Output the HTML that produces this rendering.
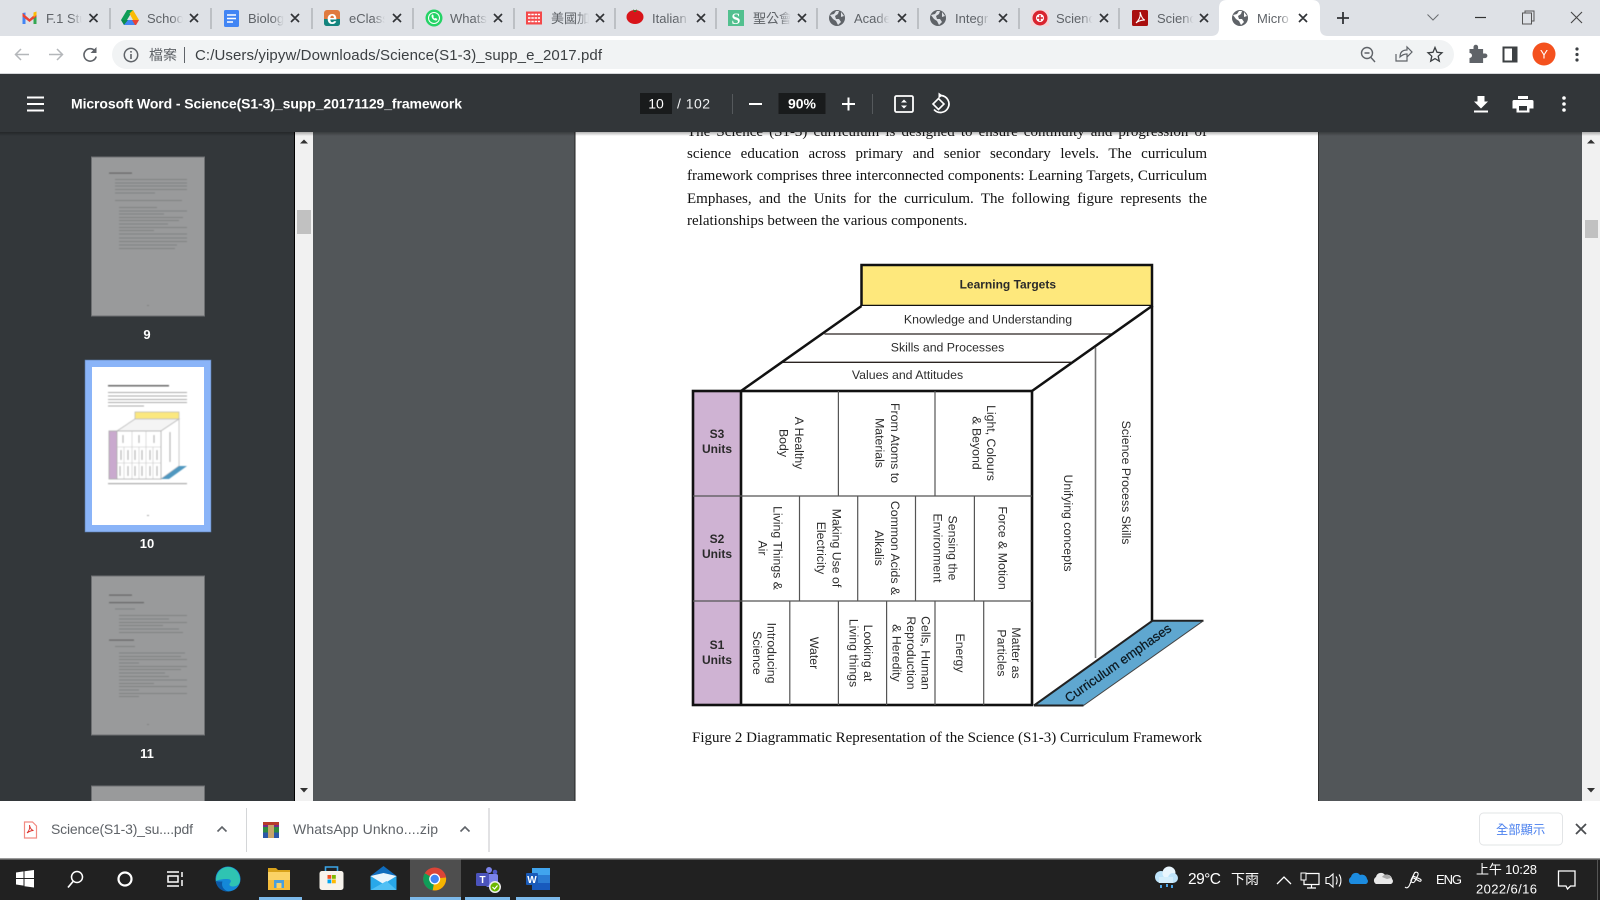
<!DOCTYPE html>
<html><head><meta charset="utf-8"><title>Science(S1-3)_supp_e_2017.pdf</title>
<style>
html,body{margin:0;padding:0;width:1600px;height:900px;overflow:hidden;background:#525659}
svg{position:absolute;left:0;top:0}
text{font-family:"Liberation Sans","Noto Sans CJK TC",sans-serif}
.tab{font-size:13px;fill:#5f6368}
.d{font-size:12.3px;fill:#2c2c2c;text-anchor:middle;dominant-baseline:central}
.b{font-size:12px;font-weight:bold;fill:#2a2a2a;text-anchor:middle;dominant-baseline:central}
.x{stroke:#303336;stroke-width:1.7;fill:none}
#para{position:absolute;left:687px;top:132px;width:520px;height:112px;overflow:hidden;font:15px/22.45px "Liberation Serif",serif;color:#111}
#para div{white-space:nowrap;text-align:justify;text-align-last:justify;height:22.45px}
#para div.last{text-align-last:left}
</style></head><body>
<svg width="1600" height="900" viewBox="0 0 1600 900">
<defs>
<linearGradient id="f" x1="0" x2="1" y1="0" y2="0"><stop offset="0" stop-color="#dee1e6" stop-opacity="0"/><stop offset=".75" stop-color="#dee1e6"/><stop offset="1" stop-color="#dee1e6"/></linearGradient>
<linearGradient id="fw" x1="0" x2="1" y1="0" y2="0"><stop offset="0" stop-color="#fff" stop-opacity="0"/><stop offset=".75" stop-color="#fff"/><stop offset="1" stop-color="#fff"/></linearGradient>
<linearGradient id="sh" x1="0" x2="0" y1="0" y2="1"><stop offset="0" stop-color="#000" stop-opacity=".3"/><stop offset="1" stop-color="#000" stop-opacity="0"/></linearGradient>
<filter id="bl" x="-5%" y="-5%" width="110%" height="110%"><feGaussianBlur stdDeviation=".55"/></filter>
<g id="globe"><circle r="8" fill="#5f6368"/><path d="M-7-3 L-3-4 L-1-7 L2-7 L1-4 L-2-2 L-1 1 L2 1 L4 4 L1 7 L-1 3 L-4 1 Z M4-6 L7-2 L4-1Z" fill="#dee1e6"/></g>
<g id="pg"><rect width="113" height="159" fill="#999a9b" stroke="#6d6f71"/></g>
</defs>

<!-- main backgrounds -->
<rect x="0" y="0" width="1600" height="900" fill="#525659"/>
<rect x="0" y="132" width="294" height="670" fill="#33373a"/>
<rect x="294" y="132" width="1.3" height="670" fill="#000"/>
<rect x="295" y="132" width="18" height="670" fill="#f1f1f1"/>
<rect x="297" y="210" width="14" height="24" fill="#c1c1c1"/>
<path d="M300 143.500h8l-4-4z" fill="#333"/><path d="M300 788h8l-4 4.500z" fill="#333"/>
<rect x="575" y="132" width="744" height="670" fill="#fff"/>
<rect x="574.500" y="132" width="1" height="670" fill="#222"/>
<rect x="1318" y="132" width="1" height="670" fill="#333"/>
<rect x="1582" y="132" width="18" height="670" fill="#f1f1f1"/>
<rect x="1585" y="220" width="13" height="18" fill="#c1c1c1"/>
<path d="M1587 143.500h8l-4-4z" fill="#333"/><path d="M1587 788h8l-4 4.500z" fill="#333"/>

<!-- thumbnails -->
<use href="#pg" x="91.500" y="157"/>
<g fill="#808182" filter="url(#bl)">
<rect x="109" y="172.500" width="23" height="1.200" fill="#666"/>
<rect x="115" y="179" width="72" height="1"/><rect x="115" y="182.500" width="72" height="1"/><rect x="115" y="185.500" width="72" height="1"/><rect x="115" y="189" width="72" height="1"/><rect x="115" y="192.500" width="40" height="1"/>
<rect x="115" y="200" width="67" height="1"/>
<rect x="119" y="207" width="38" height="1"/><rect x="119" y="210.500" width="68" height="1"/><rect x="119" y="213.500" width="45" height="1"/><rect x="119" y="217" width="64" height="1"/><rect x="119" y="220" width="60" height="1"/><rect x="119" y="223.500" width="49" height="1"/><rect x="119" y="227" width="68" height="1"/><rect x="119" y="230" width="35" height="1"/><rect x="119" y="233.500" width="68" height="1"/><rect x="119" y="237.500" width="68" height="1"/><rect x="119" y="241" width="68" height="1"/><rect x="119" y="244.500" width="58" height="1"/><rect x="119" y="248" width="56" height="1"/>
<rect x="147" y="305" width="2" height="1"/>
</g>
<text x="147" y="339" font-size="13" fill="#fff" font-weight="bold" text-anchor="middle">9</text>

<rect x="85" y="360" width="126" height="172" fill="#8ab4f8" stroke="#5a7ba8" stroke-width=".6"/>
<rect x="92" y="367" width="112" height="158" fill="#fff"/>
<g filter="url(#bl)">
<g fill="#aaa">
<rect x="108" y="385" width="61" height="1.500" fill="#666"/>
<rect x="108" y="392" width="79" height="1"/><rect x="108" y="395.500" width="79" height="1"/><rect x="108" y="399" width="79" height="1"/><rect x="108" y="402" width="79" height="1"/><rect x="108" y="405.500" width="36" height="1"/>
<rect x="108" y="483" width="79" height="1.200"/><rect x="147" y="515" width="2" height="1"/>
</g>
<rect x="135" y="412" width="44" height="7" fill="#fbe87f" stroke="#aaa" stroke-width=".6"/>
<path d="M135 419 L117 431 H161 L179 419Z" fill="#f4f4f4" stroke="#bbb" stroke-width=".8"/>
<path d="M161 431 L179 419 V466 L161 479Z" fill="#fff" stroke="#bbb" stroke-width=".8"/>
<rect x="109" y="431" width="8" height="48" fill="#c9a9ce" stroke="#aaa" stroke-width=".8"/>
<rect x="117" y="431" width="44" height="48" fill="#fff" stroke="#aaa" stroke-width=".8"/>
<path d="M117 447H161M117 463H161M132 431V447M146 431V447M124 447V463M132 447V463M139 447V463M146 447V463M153 447V463M124 463V479M132 463V479M139 463V479M146 463V479M153 463V479" stroke="#c4c4c4" stroke-width=".6" fill="none"/>
<path d="M123 435v8M139 435v8M154 435v8M121 450v10M128 450v10M135 450v10M142 450v10M150 450v10M157 450v10M120 466v10M128 466v10M135 466v10M142 466v10M150 466v10M157 466v10M170 432v30" stroke="#b4b4b4" stroke-width="1.200" fill="none"/>
<path d="M161 479 L179 466 H187 L169 479Z" fill="#4f97bf"/>
</g>
<text x="147" y="548" font-size="13" fill="#fff" font-weight="bold" text-anchor="middle">10</text>

<use href="#pg" x="91.500" y="576"/>
<g fill="#808182" filter="url(#bl)">
<rect x="109" y="594.500" width="23" height="1.200" fill="#666"/><rect x="109" y="602" width="35" height="1.200" fill="#666"/>
<rect x="115" y="608.500" width="20" height="1"/><rect x="119" y="615" width="68" height="1"/><rect x="119" y="618.500" width="50" height="1"/><rect x="119" y="622" width="68" height="1"/><rect x="119" y="625" width="44" height="1"/><rect x="119" y="628.500" width="60" height="1"/><rect x="119" y="632" width="64" height="1"/>
<rect x="109" y="639.500" width="25" height="1.200" fill="#666"/><rect x="115" y="646" width="20" height="1"/>
<rect x="119" y="652.500" width="66" height="1"/><rect x="119" y="656" width="62" height="1"/><rect x="119" y="659" width="68" height="1"/><rect x="119" y="662.500" width="20" height="1"/><rect x="119" y="666" width="68" height="1"/><rect x="119" y="669" width="62" height="1"/><rect x="119" y="672.500" width="46" height="1"/><rect x="119" y="676" width="50" height="1"/><rect x="119" y="679.500" width="68" height="1"/><rect x="119" y="683" width="35" height="1"/><rect x="119" y="686" width="68" height="1"/><rect x="119" y="689.500" width="20" height="1"/><rect x="119" y="693" width="68" height="1"/><rect x="119" y="696" width="20" height="1"/>
<rect x="147" y="724" width="2" height="1"/>
</g>
<text x="147" y="758" font-size="13" fill="#fff" font-weight="bold" text-anchor="middle">11</text>
<use href="#pg" x="91.500" y="786"/>

<!-- Diagram -->
<g>
<rect x="861.500" y="265" width="290.500" height="41" fill="#fee87c" stroke="#111" stroke-width="2.500"/>
<path d="M861.500 306 L741 391 H1032 L1152 306Z" fill="#fff"/>
<path d="M824.500 334H1112M783 362.300H1071" stroke="#2a2320" stroke-width="1.300" fill="none"/>
<path d="M861.500 306 L741 391M1152 306 L1032 391" stroke="#111" stroke-width="2.500" fill="none"/>
<path d="M1095.500 347.500V658" stroke="#777" stroke-width="1.600" fill="none"/>
<path d="M1152 306V621" stroke="#111" stroke-width="2.500" fill="none"/>
<rect x="693" y="391" width="48" height="314" fill="#cfb3d3"/>
<rect x="693" y="391" width="339" height="314" fill="none" stroke="#111" stroke-width="2.600"/>
<path d="M741 391V705" stroke="#111" stroke-width="2.600" fill="none"/>
<path d="M693 496H1032M693 601H1032M838.400 391V496M935 391V496M799.500 496V601M857.700 496V601M915.500 496V601M974.400 496V601M789.800 601V705M838.400 601V705M886.600 601V705M935 601V705M983.700 601V705" stroke="#555" stroke-width="1.200" fill="none"/>
<path d="M1152.500 620.700H1203.500L1083.500 705.500H1034Z" fill="#5fa7d0"/>
<path d="M1152.500 620.700H1203.500M1034 705.500H1083.500M1152.500 620.700L1034 705.500" stroke="#222" stroke-width="2" fill="none"/>
<path d="M1083.500 705.500L1203.500 620.700" stroke="#444" stroke-width="1" fill="none"/>

<text class="b" x="1007.800" y="284.300" font-size="12.500">Learning Targets</text>
<text class="d" x="988" y="319.500">Knowledge and Understanding</text>
<text class="d" x="947.500" y="347.700">Skills and Processes</text>
<text class="d" x="907.500" y="375">Values and Attitudes</text>

<text class="b" x="717" y="434">S3</text><text class="b" x="717" y="449">Units</text>
<text class="b" x="717" y="539">S2</text><text class="b" x="717" y="554">Units</text>
<text class="b" x="717" y="645">S1</text><text class="b" x="717" y="660">Units</text>

<text class="d" transform="translate(799,443) rotate(90)">A Healthy</text>
<text class="d" transform="translate(783.600,443) rotate(90)">Body</text>
<text class="d" transform="translate(895,443) rotate(90)">From Atoms to</text>
<text class="d" transform="translate(879.700,443) rotate(90)">Materials</text>
<text class="d" transform="translate(991,443) rotate(90)">Light, Colours</text>
<text class="d" transform="translate(976.500,443) rotate(90)">&amp; Beyond</text>

<text class="d" transform="translate(777.500,548) rotate(90)">Living Things &amp;</text>
<text class="d" transform="translate(762.500,548) rotate(90)">Air</text>
<text class="d" transform="translate(836.500,548) rotate(90)">Making Use of</text>
<text class="d" transform="translate(821,548) rotate(90)">Electricity</text>
<text class="d" transform="translate(895,548) rotate(90)">Common Acids &amp;</text>
<text class="d" transform="translate(879,548) rotate(90)">Alkalis</text>
<text class="d" transform="translate(952.500,548) rotate(90)">Sensing the</text>
<text class="d" transform="translate(937.500,548) rotate(90)">Environment</text>
<text class="d" transform="translate(1002.700,548) rotate(90)">Force &amp; Motion</text>

<text class="d" transform="translate(771.500,653) rotate(90)">Introducing</text>
<text class="d" transform="translate(757,653) rotate(90)">Science</text>
<text class="d" transform="translate(814,653) rotate(90)">Water</text>
<text class="d" transform="translate(868,653) rotate(90)">Looking at</text>
<text class="d" transform="translate(853.500,653) rotate(90)">Living things</text>
<text class="d" transform="translate(925.500,653) rotate(90)">Cells, Human</text>
<text class="d" transform="translate(911,653) rotate(90)">Reproduction</text>
<text class="d" transform="translate(896.500,653) rotate(90)">&amp; Heredity</text>
<text class="d" transform="translate(960,653) rotate(90)">Energy</text>
<text class="d" transform="translate(1016,653) rotate(90)">Matter as</text>
<text class="d" transform="translate(1001.500,653) rotate(90)">Particles</text>
<text class="d" transform="translate(1068,523) rotate(90)">Unifying concepts</text>
<text class="d" transform="translate(1126,482.500) rotate(90)">Science Process Skills</text>
<text class="d" transform="translate(1118,663) rotate(-35)" style="font-size:13px;fill:#0d1a22;stroke:#0d1a22;stroke-width:.25">Curriculum emphases</text>

<text x="692" y="742" font-size="15" fill="#111" textLength="510" style="font-family:'Liberation Serif',serif">Figure 2 Diagrammatic Representation of the Science (S1-3) Curriculum Framework</text>
</g>

<!-- Tab strip -->
<rect x="0" y="0" width="1600" height="36" fill="#dee1e6"/>
<path d="M1211 36 Q1219 36 1219 28 V8 Q1219 0 1227 0 H1312 Q1320 0 1320 8 V28 Q1320 36 1328 36Z" fill="#fff"/>
<rect x="0" y="36" width="1600" height="38" fill="#fff"/>
<rect x="0" y="73" width="1600" height="1" fill="#d5d7da"/>
<rect x="112" y="40" width="1342" height="29" rx="14.500" fill="#f1f3f4"/>
<g stroke="#a6a9ad" stroke-width="1.200"><path d="M110 8V29M211 8V29M312 8V29M413 8V29M514 8V29M615 8V29M716 8V29M817 8V29M918 8V29M1019 8V29M1119 8V29"/></g>

<g>
<text class="tab" x="46" y="23">F.1 Stu</text><rect x="70" y="6" width="16" height="24" fill="url(#f)"/>
<text class="tab" x="147" y="23">Schoo</text><rect x="171" y="6" width="16" height="24" fill="url(#f)"/>
<text class="tab" x="248" y="23">Biolog</text><rect x="272" y="6" width="16" height="24" fill="url(#f)"/>
<text class="tab" x="349" y="23">eClass</text><rect x="373" y="6" width="16" height="24" fill="url(#f)"/>
<text class="tab" x="450" y="23">Whats</text><rect x="474" y="6" width="18" height="24" fill="url(#f)"/>
<text class="tab" x="551" y="23">美國加</text><rect x="577" y="6" width="16" height="24" fill="url(#f)"/>
<text class="tab" x="652" y="23">Italian</text><rect x="676" y="6" width="18" height="24" fill="url(#f)"/>
<text class="tab" x="753" y="23">聖公會</text><rect x="779" y="6" width="16" height="24" fill="url(#f)"/>
<text class="tab" x="854" y="23">Acade</text><rect x="876" y="6" width="18" height="24" fill="url(#f)"/>
<text class="tab" x="955" y="23">Integr</text><rect x="977" y="6" width="18" height="24" fill="url(#f)"/>
<text class="tab" x="1056" y="23">Scienc</text><rect x="1080" y="6" width="17" height="24" fill="url(#f)"/>
<text class="tab" x="1157" y="23">Scienc</text><rect x="1181" y="6" width="17" height="24" fill="url(#f)"/>
<text class="tab" x="1257" y="23">Micro</text><rect x="1279" y="6" width="17" height="24" fill="url(#fw)"/>
</g>
<!-- Tab closes -->
<path class="x" d="M89.500 14l8 8m0-8l-8 8M190 14l8 8m0-8l-8 8M291 14l8 8m0-8l-8 8M393 14l8 8m0-8l-8 8M494 14l8 8m0-8l-8 8M596 14l8 8m0-8l-8 8M697 14l8 8m0-8l-8 8M798 14l8 8m0-8l-8 8M898 14l8 8m0-8l-8 8M999 14l8 8m0-8l-8 8M1100 14l8 8m0-8l-8 8M1200 14l8 8m0-8l-8 8M1299 14l8 8m0-8l-8 8"/>

<!-- Favicons -->
<g transform="translate(29.500,18)"><path d="M-7 6V-5L-4-5.500V6H-6.500Z" fill="#4285f4"/><path d="M4 6V-5.500L7-5V6Z" fill="#34a853"/><path d="M-7-5L0 1L7-5V-1.500L0 4L-7-1.500Z" fill="#ea4335"/><path d="M4-5.500L7-6.500V-3L4-.5Z" fill="#fbbc04"/></g>
<g transform="translate(130,18)"><path d="M-3-8H3L-3 2H-9Z" fill="#0f9d58"/><path d="M3-8L9 2H3L-.500-4.500Z" fill="#fbbc04"/><path d="M-9 2L-6 7H6L9 2Z" fill="#4285f4"/><path d="M-9 2L-6 7L-2 2Z" fill="#0c8c4c"/><path d="M9 2L6 7H5L2 2Z" fill="#ea4335"/></g>
<g transform="translate(231,18)"><rect x="-7" y="-8" width="15" height="17" rx="1.500" fill="#4285f4"/><path d="M-4-3H5M-4 .5H5M-4 4H2" stroke="#fff" stroke-width="1.600" fill="none"/></g>
<g transform="translate(332,18)"><rect x="-8" y="-8" width="16" height="16" rx="3" fill="#e07a3f"/><path d="M-8 1H8V5Q8 8 5 8H-5Q-8 8-8 5Z" fill="#13847e"/><text x="0" y="6" font-size="18" fill="#fff" text-anchor="middle" font-weight="bold">e</text></g>
<g transform="translate(434,18)"><circle r="8.500" fill="#25d366"/><circle r="6" fill="#fff"/><circle r="5" fill="#25d366"/><path d="M-2.500-2.500c0 3 2 5 5 5l1-1.500-2-1-.8.600-1.500-1.500.6-.8-1-2z" fill="#fff"/></g>
<g transform="translate(534,18)"><rect x="-8" y="-6.500" width="16" height="13" fill="#f4494a"/><path d="M-6-3.500H6M-6 0H6M-6 3.500H6" stroke="#fff" stroke-width="1.400" stroke-dasharray="2.500 .8"/></g>
<g transform="translate(635,18)"><ellipse rx="8.500" ry="7" cy="-1" fill="#d8141a"/><path d="M-2-9L0-7L2-9L1-6H-1Z" fill="#2d7d2a"/></g>
<g transform="translate(736,18)"><rect x="-8" y="-8" width="16" height="16" fill="#52c08f"/><text x="0" y="6" font-size="16" fill="#fff" font-weight="bold" text-anchor="middle" style="font-family:'Liberation Serif',serif">S</text></g>
<use href="#globe" x="837" y="18"/><use href="#globe" x="938" y="18"/>
<g transform="translate(1040,18)"><rect x="-9" y="-8" width="18" height="16" fill="#f3d5d8"/><circle r="7.500" fill="#d9232e"/><circle r="4" fill="#fff"/><path d="M0-3v6M-3 0h6" stroke="#d9232e" stroke-width="1.500"/></g>
<g transform="translate(1140,18)"><rect x="-8" y="-8" width="16" height="16" rx="1.500" fill="#a90f0f"/><path d="M-4 5C-1 2 1-2 0-6C1-2 3 2 5 2C2 2-2 3-4 5Z" fill="none" stroke="#fff" stroke-width="1.100"/></g>
<g transform="translate(1240,18)"><circle r="8" fill="#5f6368"/><path d="M-7-3 L-3-4 L-1-7 L2-7 L1-4 L-2-2 L-1 1 L2 1 L4 4 L1 7 L-1 3 L-4 1 Z M4-6 L7-2 L4-1Z" fill="#fff"/></g>

<!-- new tab & window buttons -->
<path d="M1337 18H1349M1343 12V24" stroke="#303336" stroke-width="1.800" fill="none"/>
<path d="M1427.500 14.500l5.500 5.500 5.500-5.500" stroke="#6a6d70" fill="none"/>
<path d="M1475 17.500H1486" stroke="#333" stroke-width="1.200" fill="none"/>
<path d="M1522.500 13h9v11h-9zM1525 13v-2h9v10h-2.500" stroke="#555" fill="none"/>
<path d="M1571 12l11 11m0-11l-11 11" stroke="#444" stroke-width="1.100" fill="none"/>

<!-- Nav toolbar -->
<path d="M29 54.500H15.500M21 49l-5.500 5.500 5.500 5.500" stroke="#b4b7ba" stroke-width="1.500" fill="none"/>
<path d="M49 54.500H62.500M57 49l5.500 5.500-5.500 5.500" stroke="#b4b7ba" stroke-width="1.500" fill="none"/>
<path d="M95 51a6.200 6.200 0 1 0 1.200 5.500" stroke="#5f6368" stroke-width="1.600" fill="none"/><path d="M96.500 47v6h-6z" fill="#5f6368"/>
<circle cx="131" cy="55" r="6.700" stroke="#5f6368" stroke-width="1.500" fill="none"/><path d="M131 54v5M131 51v1.600" stroke="#5f6368" stroke-width="1.600"/>
<text x="149" y="60" font-size="14" fill="#5f6368">檔案</text>
<rect x="184" y="47" width="1" height="16" fill="#5f6368"/>
<text x="195" y="60" font-size="15" fill="#3c4043" textLength="407">C:/Users/yipyw/Downloads/Science(S1-3)_supp_e_2017.pdf</text>
<circle cx="1367" cy="53" r="5.500" stroke="#5f6368" stroke-width="1.400" fill="none"/><path d="M1371 57.500l4 4.500M1364.500 53h5" stroke="#5f6368" stroke-width="1.400" fill="none"/>
<path d="M1396 54v7h11v-4M1400 57c0-5 3-7 7-7v-3l5 5-5 5v-3c-3 0-5 1-7 3z" stroke="#5f6368" stroke-width="1.200" fill="none"/>
<path d="M1435 47.500l2 4.800 5 .5-3.800 3.400 1.100 5-4.300-2.600-4.300 2.600 1.100-5-3.800-3.400 5-.5z" stroke="#3c4043" stroke-width="1.300" fill="none"/>
<path d="M1470 50h4v-2a2.300 2.300 0 0 1 4.600 0v2h5v4.500h2a2.300 2.300 0 0 1 0 4.600h-2v4.900h-13.600v-5a2.500 2.500 0 0 0 0-5z" fill="#5f6368" transform="translate(-.5,-1) "/>
<path d="M1503.500 47.500h13v14h-13z" stroke="#3c4043" stroke-width="2" fill="none"/><rect x="1512" y="47" width="5" height="15" fill="#3c4043"/>
<circle cx="1544" cy="54" r="11.500" fill="#f4511e"/><text x="1544" y="58.500" font-size="12" fill="#fff" text-anchor="middle">Y</text>
<g fill="#3c4043"><circle cx="1577" cy="49" r="1.600"/><circle cx="1577" cy="54.500" r="1.600"/><circle cx="1577" cy="60" r="1.600"/></g>

<!-- PDF toolbar -->
<rect x="0" y="74" width="1600" height="58" fill="#323639"/>
<rect x="0" y="132" width="1600" height="4" fill="url(#sh)"/>
<path d="M27 97.500H44M27 104H44M27 110.500H44" stroke="#fff" stroke-width="2" fill="none"/>
<text x="71" y="108.500" font-size="14" font-weight="bold" fill="#fff" textLength="391">Microsoft Word - Science(S1-3)_supp_20171129_framework</text>
<rect x="640" y="93" width="32" height="21" fill="#191b1c"/>
<text x="656" y="108.500" font-size="14" fill="#fff" text-anchor="middle">10</text>
<text x="677" y="108.500" font-size="14" fill="#f1f3f4" textLength="33">/ 102</text>
<rect x="732" y="94" width="1" height="20" fill="#55595c"/>
<path d="M749 104H762" stroke="#fff" stroke-width="2"/>
<rect x="778.500" y="93" width="47" height="21" fill="#191b1c"/>
<text x="802" y="108.500" font-size="14" font-weight="bold" fill="#fff" text-anchor="middle" textLength="28">90%</text>
<path d="M842 104H855M848.500 97.500V110.500" stroke="#fff" stroke-width="2"/>
<rect x="872" y="94" width="1" height="20" fill="#55595c"/>
<rect x="895" y="96" width="18" height="16" rx="1.500" stroke="#fff" stroke-width="1.800" fill="none"/>
<path d="M901 102.500l3-3 3 3zM901 105.500l3 3 3-3z" fill="#fff"/>
<path d="M941 95.500a8.500 8.500 0 1 1-7 14" stroke="#fff" stroke-width="1.700" fill="none"/><path d="M938.500 92.500v6l4-3z" fill="#fff"/>
<path d="M933 104l5.500-5.500 5.500 5.500-5.500 5.500z" stroke="#fff" stroke-width="1.600" fill="none"/>
<path d="M1477.500 96h7v5.500h3.500l-7 7-7-7h3.500zM1474 110.500h14v2h-14z" fill="#fff"/>
<path d="M1518 96h10v3h-10zM1514 100h18a1.500 1.500 0 0 1 1.500 1.500v7h-4v4h-13v-4h-4v-7A1.500 1.500 0 0 1 1514 100z" fill="#fff"/><rect x="1519" y="106" width="8" height="4.500" fill="#323639"/>
<g fill="#fff"><circle cx="1564" cy="98" r="1.800"/><circle cx="1564" cy="104" r="1.800"/><circle cx="1564" cy="110" r="1.800"/></g>

<!-- Download shelf -->
<rect x="0" y="801" width="1600" height="57" fill="#fff"/>
<rect x="0" y="858" width="1600" height="1.500" fill="#9a9a9a"/>
<rect x="246" y="808" width="1" height="44" fill="#d4d6d8"/>
<rect x="488.500" y="808" width="1" height="44" fill="#c4c6c8"/>
<path d="M24.500 822h8l4 4v12h-12z" fill="#fff" stroke="#f28b82" stroke-width="1.200"/><path d="M27 833c2-2 3-5 2.500-8 .5 3 2 5 4 5.500-2.500 0-4.500 1-6.500 2.500z" fill="none" stroke="#d9302a" stroke-width=".9"/>
<text x="51" y="834" font-size="14" fill="#5f6368" textLength="142">Science(S1-3)_su....pdf</text>
<path d="M217.500 831.500l4.500-4.500 4.500 4.500" stroke="#5f6368" stroke-width="1.600" fill="none"/>
<g transform="translate(263,822)"><rect width="16" height="16" fill="#7a2a8a"/><rect y="5" width="16" height="5.500" fill="#2d8a42"/><rect y="10.500" width="16" height="5.500" fill="#2b57a8"/><rect x="5" width="6" height="16" fill="#c7a46a"/><rect x="0" y="0" width="16" height="3" fill="#b83a2a"/></g>
<text x="293" y="834" font-size="14" fill="#5f6368" textLength="145">WhatsApp Unkno....zip</text>
<path d="M460.500 831.500l4.500-4.500 4.500 4.500" stroke="#5f6368" stroke-width="1.600" fill="none"/>
<rect x="1479.500" y="813" width="83" height="32" rx="4" fill="#fff" stroke="#e2e4e6"/>
<text x="1496" y="834" font-size="12.300" fill="#4a80ee">全部顯示</text>
<path d="M1576 824l10 10m0-10l-10 10" stroke="#4a4d50" stroke-width="1.800" fill="none"/>

<!-- Taskbar -->
<rect x="0" y="859.500" width="1600" height="40.500" fill="#212121"/>
<rect x="410" y="859.500" width="51" height="40.500" fill="#4e4e4e"/>
<g fill="#7cb9ea"><rect x="259" y="897" width="43" height="3"/><rect x="410" y="897" width="51" height="3"/><rect x="465" y="897" width="45" height="3"/><rect x="516" y="897" width="44" height="3"/></g>
<path d="M16 872.500l7.500-1.100V878H16zM24.500 871.200L34 870v8h-9.500zM16 879h7.500v6.600L16 884.500zM24.500 879H34v8.500l-9.500-1.300z" fill="#fff"/>
<circle cx="77" cy="877" r="5.500" stroke="#fff" stroke-width="1.500" fill="none"/><path d="M73 881.500l-5 6" stroke="#fff" stroke-width="1.700"/>
<circle cx="125" cy="879" r="6.500" stroke="#fff" stroke-width="2.200" fill="none"/>
<path d="M167 872h12M167 886h12M168 876h10v6h-10zM182 872v5M182 880v6" stroke="#fff" stroke-width="1.500" fill="none"/>
<!-- edge -->
<g transform="translate(228,879)"><circle r="12.500" fill="#1488d8"/><path d="M-12 2a12 13 0 0 1 24-2c.5 5-3 7.500-7 7.500-3 0-4.500-1.500-3-3.500 1.500-1.500 1.500-4-3-4-5 0-9 1-11 2z" fill="#2fc4b2"/><path d="M-12 2c0 6 6 11 12 10.500-5-2-7-6-5.500-10-2.500 0-5 0-6.500-.5z" fill="#0c59a4"/></g>
<!-- explorer -->
<g transform="translate(279,879)"><path d="M-11-11h8l2 2h12v4h-22z" fill="#d9a21b"/><rect x="-11" y="-7" width="22" height="18" fill="#fbd266"/><rect x="-11" y="1" width="22" height="10" fill="#f4bb3a"/><rect x="-5" y="1" width="10" height="8" fill="#4a9fdc"/><rect x="-2.500" y="4" width="5" height="5" fill="#fbd266"/></g>
<!-- store -->
<g transform="translate(331.500,879)"><path d="M-6-8V-12H6V-8" stroke="#3aa5e8" stroke-width="1.600" fill="none"/><rect x="-12" y="-8" width="24" height="19" rx="2.500" fill="#f7f3ec"/><rect x="-4" y="-4" width="3.800" height="3.800" fill="#f25022"/><rect x=".5" y="-4" width="3.800" height="3.800" fill="#7fba00"/><rect x="-4" y=".5" width="3.800" height="3.800" fill="#00a4ef"/><rect x=".5" y=".5" width="3.800" height="3.800" fill="#ffb900"/></g>
<!-- mail -->
<g transform="translate(383.500,879)"><path d="M-13-3L0-13L13-3V10H-13Z" fill="#0f6cbd"/><rect x="-13" y="-3" width="26" height="14" fill="#28a8ea"/><path d="M-13-3L0 5L13-3V-3L0-6Z" fill="#e8f4fc"/><path d="M-13 11L3 2L13 11Z" fill="#50c0f5"/></g>
<!-- chrome -->
<g transform="translate(434.700,879)"><circle r="11.500" fill="#db4437"/><path d="M0 0L-10-5.800A11.500 11.500 0 0 0 -2 11.300L5 0Z" fill="#0f9d58"/><path d="M0 0L6-1L11.300 -1.500A11.500 11.500 0 0 1 -2 11.300Z" fill="#f4b400"/><circle r="5.500" fill="#fff"/><circle r="4.200" fill="#4285f4"/></g>
<!-- teams -->
<g transform="translate(486,879)"><circle cx="3" cy="-9" r="3" fill="#7b83eb"/><circle cx="9" cy="-7" r="2.300" fill="#5059c9"/><rect x="0" y="-5" width="12" height="13" rx="2" fill="#7b83eb"/><rect x="-10" y="-6" width="13" height="13" rx="1.500" fill="#4b53bc"/><text x="-3.500" y="4" font-size="10" font-weight="bold" fill="#fff" text-anchor="middle">T</text><circle cx="9" cy="8" r="6" fill="#eee"/><circle cx="9" cy="8" r="4.500" fill="#6bb700"/><path d="M6.500 8l2 2 3-3.500" stroke="#fff" stroke-width="1.200" fill="none"/></g>
<!-- word -->
<g transform="translate(538,879)"><rect x="-6" y="-11" width="18" height="22" rx="1.500" fill="#2b7cd3"/><rect x="-6" y="-11" width="18" height="7" fill="#41a5ee"/><rect x="-6" y="4" width="18" height="7" fill="#185abd"/><rect x="-12" y="-6" width="12" height="12" rx="1" fill="#1a5bb8"/><text x="-6" y="4" font-size="10" font-weight="bold" fill="#fff" text-anchor="middle">W</text></g>

<!-- Tray -->
<g transform="translate(1166,878)"><circle cx="-5" cy="-1" r="6" fill="#bfe5fb"/><circle cx="3" cy="-5" r="6.500" fill="#e9f6fe"/><circle cx="7" cy="0" r="5" fill="#bfe5fb"/><rect x="-7" y="-1" width="14" height="6" fill="#d4eefc"/><path d="M-5 7v3M1 6v3M6 7v3" stroke="#4aa4e8" stroke-width="2"/></g>
<text x="1188" y="884" font-size="15.500" fill="#fff" textLength="33">29°C</text>
<text x="1231" y="884" font-size="14" fill="#fff">下雨</text>
<path d="M1277 884l7-7 7 7" stroke="#fff" stroke-width="1.300" fill="none"/>
<path d="M1304 873.500h15v11h-15zM1311.500 884.500v3M1307 888h9" stroke="#fff" stroke-width="1.200" fill="none"/><rect x="1301" y="873" width="5" height="7" fill="#212121" stroke="#fff"/>
<path d="M1326 877.500h3l4-3.500v13l-4-3.500h-3zM1336 876.500c1.500 2 1.500 6 0 8M1339 874.500c2.500 3 2.500 9 0 12" stroke="#fff" stroke-width="1.100" fill="none"/>
<path d="M1351 884a4 4 0 0 1 0-7 5 5 0 0 1 9-2 5 5 0 0 1 7 4 3 3 0 0 1-1 5z" fill="#1c8ce0"/>
<path d="M1376 884a4 4 0 0 1 0-7 5 5 0 0 1 9-2 5 5 0 0 1 7 4 3 3 0 0 1-1 5z" fill="#e8e8e8"/><path d="M1382 877a5 5 0 0 1 9 1l-4 1z" fill="#a8a8a8"/>
<path d="M1405 887c2 2 4 0 5-3l4-10c1-3 5-2 4 1l-3 6c-1 3-5 1-4-1l3-6M1412 877l7 4c2 1 3-1 1-2l-7-3" stroke="#fff" stroke-width="1.100" fill="none"/>
<text x="1436" y="884" font-size="13" fill="#fff" textLength="26">ENG</text>
<text x="1476" y="874" font-size="13" fill="#fff" textLength="61">上午 10:28</text>
<text x="1476" y="893.500" font-size="13" fill="#fff" textLength="61">2022/6/16</text>
<path d="M1558.500 871h16.500v15h-4.500l-3 3-1.500-3h-7.500z" stroke="#fff" stroke-width="1.300" fill="none"/>
<rect x="1597" y="860" width="1" height="40" fill="#555"/>
</svg>
<div id="para"><div style="margin-top:-11.500px">The Science (S1-3) curriculum is designed to ensure continuity and progression of</div><div>science education across primary and senior secondary levels. The curriculum</div><div>framework comprises three interconnected components: Learning Targets, Curriculum</div><div>Emphases, and the Units for the curriculum. The following figure represents the</div><div class="last">relationships between the various components.</div></div>
</body></html>
